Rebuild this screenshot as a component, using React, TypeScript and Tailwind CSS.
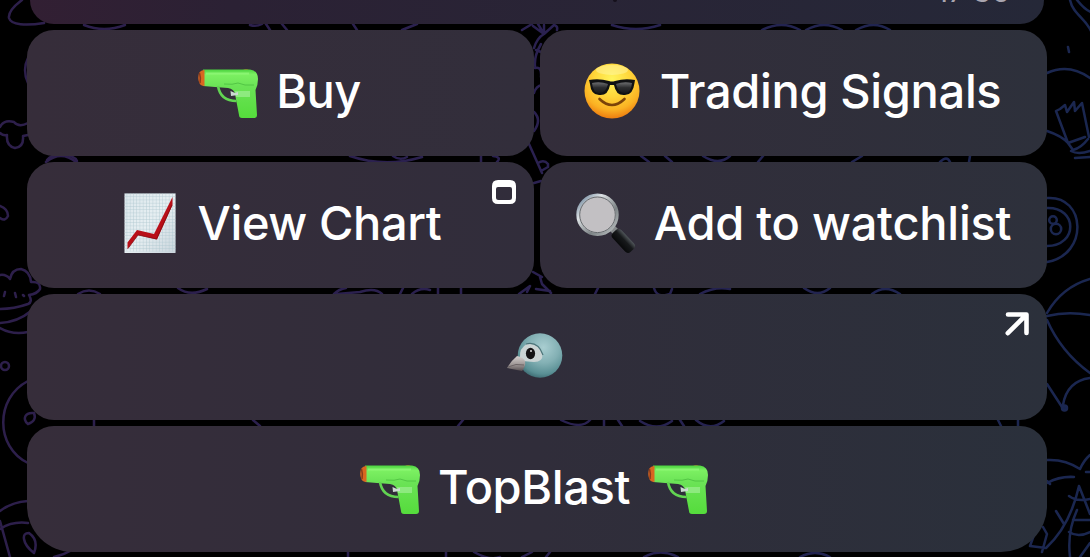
import type { ReactNode } from "react";
import clsx from "clsx";

function Wallpaper() {
  return (
    <svg
      className="absolute inset-0"
      width="1090"
      height="557"
      viewBox="0 0 1090 557"
      fill="none"
      stroke="url(#doodle)"
      strokeWidth="2.5"
      strokeLinecap="round"
      strokeLinejoin="round"
    >
      <defs>
        <linearGradient id="doodle" gradientUnits="userSpaceOnUse" x1="0" y1="0" x2="1090" y2="0">
          <stop offset="0" stopColor="#2d1f4b" />
          <stop offset="0.5" stopColor="#2a2150" />
          <stop offset="1" stopColor="#1a2750" />
        </linearGradient>
      </defs>
      {/* planet and cloud, left edge */}
      <path d="M22 0C14 6 8 12 9 18C11 25 26 26 44 23" />
      <path d="M84 25Q104 33 125 25" />
      <path d="M28 58Q22 70 28 83" />
      <path d="M0 127Q4 119 14 122Q19 128 28 123M0 133Q3 136 7 135Q6 146 15 148Q24 147 23 136L28 135" />
      <path d="M47 160Q52 154 62 155Q74 155 77 161" />
      <path d="M0 206Q8 209 8 216Q5 222 0 218" />
      {/* cupcake */}
      <path d="M0 275Q6 274 10 279Q12 269 21 269Q30 271 31 282Q41 281 40 289Q37 294 29 295Q33 302 28 304Q14 309 0 309M0 323Q18 322 31 311M0 328Q12 335 28 332M5 292L4 296M15 293L16 297M23 295L24 296" />
      <circle cx="5" cy="366" r="4" />
      <path d="M28 381C-5 398-5 447 28 463" />
      <path d="M28 424C22 419 25 412 34 413Q37 421 28 424" />
      <path d="M78 294Q89 287 100 294M94 420V426" />
      <path d="M0 511Q12 502 28 501M0 529Q12 521 28 523M0 521L10 557M24 539Q23 533 29 533Q39 540 34 553Q25 546 24 539" />
      <path d="M54 557Q63 555 70 551" />
      {/* slivers between the rows */}
      <path d="M250 25Q256 27 262 24M266 24L270 30M282 24L287 30M353 24L357 30M402 30L417 24M522 30L532 24M612 25Q636 33 660 25M762 30Q782 20 800 30M806 30Q824 20 842 30M856 30Q874 20 890 30" />
      <path d="M46 162Q61 150 76 162M350 156Q385 168 422 157M393 156Q400 161 407 157M481 156V162M493 156Q502 157 497 162M641 156L649 162M665 156L672 162M703 156Q719 166 730 156M758 162L763 156M852 162L862 156M940 162Q947 155 950 162M970 156L969 162" />
      <path d="M178 288Q190 297 207 289M334 294Q339 289 346 288M337 294L360 292Q375 287 382 294M403 288L400 294M412 294Q420 287 430 290M438 288V294M461 294V288M595 294L598 288M654 288Q657 299 670 294L672 289M700 294Q715 286 730 289M804 288Q818 298 830 288M872 294Q885 284 900 294" />
      <path d="M253 420L260 426M458 426L463 420M561 420Q581 430 590 420M604 420V426M618 420L622 426M640 421Q657 432 672 421M680 420L684 426M696 420Q710 432 724 421M998 420L1001 426M1018 420V426" />
      <path d="M348 552V557M446 552V557M474 552Q490 561 500 557M522 557L532 552M546 557L550 552M644 557Q660 548 678 557M800 557Q815 549 830 557" />
      {/* centre gutter */}
      <path d="M533 26L544 34L538 24M544 34V25M544 34L554 25Q558 26 557 30M544 34Q537 38 534 48M536 50L541 52M541 44Q534 56 535 66M535 68Q542 66 541 77M534 93Q536 86 542 85M534 112Q542 120 534 131M529 144L542 173M538 163Q544 159 548 164V167L541 171M534 183L541 181M533 272L542 277M519 294L530 286L527 292M540 277L542 284L551 293M536 289L550 291" />
      {/* right edge */}
      <path d="M1070 0C1073 14 1085 18 1091 31M1077 0Q1085 10 1091 12M1068 47L1069 52" />
      <path d="M1047 73Q1069 63 1090 78M1047 131Q1062 136 1068 143M1068 143L1056 111L1060 109L1065 105L1067 112L1074 102L1075 111L1082 103L1089 137M1068 143L1073 150Q1081 148 1088 139M1071 151Q1078 155 1090 151M1075 158L1090 157M1068 143L1085 137" />
      <path d="M1047 198C1086 195 1089 255 1047 262M1047 208C1078 207 1078 246 1047 246" />
      <circle cx="1053" cy="220" r="3.800" />
      <circle cx="1056" cy="229" r="5.200" />
      <path d="M1047 313Q1062 287 1090 279M1047 316Q1067 311 1090 315M1047 320Q1061 352 1090 373M1047 384L1062 407M1063 405Q1067 381 1090 378" />
      <circle cx="1064.500" cy="408" r="2.500" fill="#18254e" />
      <path d="M1047 460Q1065 459 1080 469Q1084 460 1090 455M1086 472H1090M1047 483Q1060 476 1074 477" />
      <path d="M1047 481L1050 484M1034 535L1030 546L1046 548Q1070 526 1079 486M1042 552L1047 534L1043 527M1056 511L1064 524M1079 486L1090 514M1069 496Q1077 502 1090 499M1070 557Q1067 532 1077 510M1069 532Q1078 538 1090 532M1073 520H1090M1080 557L1090 543" />
    </svg>
  );
}

function Pistol() {
  return (
    <svg className="size-[60px] shrink-0" viewBox="0 0 60 60">
      <defs>
        <linearGradient id="barrel" x1="0" y1="0" x2="0" y2="1">
          <stop offset="0" stopColor="#4bd33f" />
          <stop offset="0.1" stopColor="#7cf062" />
          <stop offset="0.35" stopColor="#6be356" />
          <stop offset="1" stopColor="#55dc3c" />
        </linearGradient>
      </defs>
      <path d="M45 9Q48 7 51 9V11H45Z" fill="#a85a25" />
      <path
        d="M5 8.500H52Q60 9.500 60 18Q60 24 57.500 29L59 54Q59 57 56 57H44Q41 57 41 54L37 33Q36 28 30 27L17 26L5 25Z"
        fill="url(#barrel)"
      />
      <path d="M20 25Q22.500 40 38.500 40" fill="none" stroke="#62d452" strokeWidth="2.600" />
      <path d="M8 12.500H51" stroke="#a0ff88" strokeWidth="2" opacity="0.5" />
      <path d="M26 23Q35 24 40 22Q46 25 56 24" fill="none" stroke="#4fc243" strokeWidth="0.900" />
      <path d="M37 30H52V36H38Z" fill="#a3ee98" opacity="0.65" />
      <path d="M32.500 30L37 32L40 31V34L33 35Z" fill="#cbd9d1" />
      <path d="M1 12Q3 9 6.500 9V25Q2 25 1 21Q-0.500 17 1 12Z" fill="#d96620" />
      <path d="M1.500 12Q3 17 2 22" fill="none" stroke="#8b3b1a" strokeWidth="1.500" />
    </svg>
  );
}

function Sunglasses() {
  return (
    <svg className="size-[60px] shrink-0" viewBox="0 0 60 60">
      <defs>
        <radialGradient id="face" cx="0.5" cy="0.28" r="0.72">
          <stop offset="0" stopColor="#fff45c" />
          <stop offset="0.45" stopColor="#ffd63a" />
          <stop offset="0.78" stopColor="#fbb223" />
          <stop offset="1" stopColor="#ed7d10" />
        </radialGradient>
        <linearGradient id="lens" x1="0" y1="0" x2="0" y2="1">
          <stop offset="0" stopColor="#6d6e70" />
          <stop offset="0.5" stopColor="#2c2d2f" />
          <stop offset="1" stopColor="#18191b" />
        </linearGradient>
      </defs>
      <circle cx="30" cy="30" r="27.500" fill="url(#face)" />
      <ellipse cx="30" cy="9" rx="16" ry="5" fill="#fff9b0" opacity="0.45" />
      <path
        d="M7 19Q17 17 27 20Q30 21 33 20Q43 17 53 19L52.500 22Q51 34 43 34Q34 35 32 24H28Q26 35 17 34Q9 34 8 23Z"
        fill="#101113"
      />
      <path d="M10 22Q18 20 26 23Q24 32 17 32Q11 32 10 22ZM34 23Q42 20 50 22Q49 32 43 32Q36 32 34 23Z" fill="url(#lens)" />
      <path d="M17.500 38Q30 50 42.500 38" fill="none" stroke="#7b4309" strokeWidth="2.600" strokeLinecap="round" />
    </svg>
  );
}

function ChartEmoji() {
  return (
    <svg className="size-[60px] shrink-0" viewBox="0 0 60 60">
      <defs>
        <pattern id="grid" width="3.250" height="3.250" patternUnits="userSpaceOnUse">
          <path d="M0 0H3.250M0 0V3.250" stroke="#b0c8d1" strokeWidth="0.800" />
        </pattern>
        <linearGradient id="paper" x1="0" y1="0" x2="1" y2="1">
          <stop offset="0" stopColor="#dce7ec" />
          <stop offset="0.5" stopColor="#e7eff2" />
          <stop offset="1" stopColor="#cbd6dd" />
        </linearGradient>
      </defs>
      <rect x="4.500" y="0.500" width="51" height="59.500" fill="url(#paper)" />
      <rect x="4.500" y="0.500" width="51" height="58" fill="url(#grid)" />
      <path d="M7.500 56V49.500L17 37L34 41L52.500 4V12L37 46.500L18 42Z" fill="#b90f18" />
      <path d="M8 55.500L18 42L36.500 46L52 12" fill="none" stroke="#850c13" strokeWidth="0.800" />
    </svg>
  );
}

function Magnifier() {
  return (
    <svg className="size-[60px] shrink-0" viewBox="0 0 60 60">
      <defs>
        <linearGradient id="rim" x1="0" y1="0" x2="1" y2="1">
          <stop offset="0" stopColor="#56738c" />
          <stop offset="0.3" stopColor="#dde2e5" />
          <stop offset="0.65" stopColor="#7c8385" />
          <stop offset="1" stopColor="#c4c9cb" />
        </linearGradient>
        <linearGradient id="handle" x1="0" y1="1" x2="0" y2="0">
          <stop offset="0" stopColor="#08090a" />
          <stop offset="0.6" stopColor="#17191b" />
          <stop offset="1" stopColor="#50565a" />
        </linearGradient>
      </defs>
      <path d="M33 37L38 32L42 36L37 41Z" fill="#85898b" />
      <rect x="-3" y="-6" width="26" height="12" rx="4" transform="translate(40.500 40.500) rotate(47)" fill="url(#handle)" />
      <circle cx="21.500" cy="21.800" r="19.700" fill="#c2c0c3" stroke="url(#rim)" strokeWidth="3" />
      <circle cx="21.500" cy="21.800" r="17.800" fill="none" stroke="#5d6366" strokeWidth="0.900" />
    </svg>
  );
}

function Bird() {
  return (
    <svg className="size-[60px] shrink-0" viewBox="0 0 60 60">
      <defs>
        <radialGradient id="head" cx="0.58" cy="0.32" r="0.7">
          <stop offset="0" stopColor="#a9ced1" />
          <stop offset="0.5" stopColor="#83b0b4" />
          <stop offset="0.85" stopColor="#598f94" />
          <stop offset="1" stopColor="#3f6d74" />
        </radialGradient>
        <linearGradient id="beak" x1="0" y1="0" x2="0" y2="1">
          <stop offset="0" stopColor="#d8d2d0" />
          <stop offset="0.6" stopColor="#9a9392" />
          <stop offset="1" stopColor="#574f52" />
        </linearGradient>
      </defs>
      <circle cx="33" cy="30.500" r="22.300" fill="url(#head)" />
      <path d="M13 33Q12 23 20 19Q31 17 35.500 29Q36 37 27 37L15 36Z" fill="#cbd4d4" />
      <path d="M19 19Q31 16 36 30" fill="none" stroke="#4c7479" strokeWidth="1.200" />
      <ellipse cx="23.500" cy="28.500" rx="4.600" ry="5.700" fill="#151314" />
      <circle cx="24" cy="26" r="1" fill="#d8d8d8" />
      <path d="M10 31Q16 32 18 36Q19 42 15 46L0 43Q4 36 10 31Z" fill="url(#beak)" />
      <path d="M1 42Q9 38 17 40" fill="none" stroke="#6d6566" strokeWidth="1" />
    </svg>
  );
}

function Label({ children, className }: { children: ReactNode; className: string }) {
  return <span className={clsx("whitespace-nowrap pb-px leading-[60px]", className)}>{children}</span>;
}

function KeyboardButton({ children, className }: { children: ReactNode; className: string }) {
  return (
    <button
      className={clsx(
        "relative flex h-[126px] items-center justify-center gap-[18px] bg-linear-to-r pb-1 text-[47px] font-medium text-white",
        className
      )}
    >
      {children}
    </button>
  );
}

export default function App() {
  return (
    <div className="relative h-[557px] w-[1090px] overflow-hidden bg-black font-['Inter',sans-serif]">
      <Wallpaper />
      <div className="relative flex flex-col gap-1.5 pr-[43px] pl-[27px]">
        <div className="mr-[3px] ml-[3px] flex h-6 items-start justify-end overflow-hidden rounded-b-[26px] bg-linear-to-r from-[#321f33] via-[#2b2134] via-20% to-[#252838] pr-[34px]">
          <span className="mr-[319px] h-0.5 w-1 rounded-b-full bg-[#15101b]" />
          <span className="-mt-[29px] text-[30px] leading-[40px] text-[#aaa6b0]">17:36</span>
        </div>

        <div className="grid grid-cols-2 gap-1.5">
          <KeyboardButton className="rounded-[27px] from-[#362d3a] to-[#322e3b] pr-0.5">
            <Pistol />
            <Label className="tracking-[-0.5px]">Buy</Label>
          </KeyboardButton>
          <KeyboardButton className="rounded-[27px] from-[#332d3a] to-[#2d303b] pr-1">
            <Sunglasses />
            <Label className="tracking-[-0.35px]">Trading Signals</Label>
          </KeyboardButton>
        </div>

        <div className="grid grid-cols-2 gap-1.5">
          <KeyboardButton className="rounded-[27px] from-[#362d3a] to-[#312d3b]">
            <ChartEmoji />
            <Label className="tracking-[-0.4px]">View Chart</Label>
            <svg className="absolute top-[18px] right-[18px] size-6" viewBox="0 0 24 24">
              <path
                fillRule="evenodd"
                fill="#fff"
                d="M6 0H18Q24 0 24 6V18Q24 24 18 24H6Q0 24 0 18V6Q0 0 6 0ZM6 7Q4 7 4 9V17.500Q4 20 6.500 20H17.500Q20 20 20 17.500V9Q20 7 18 7Z"
              />
            </svg>
          </KeyboardButton>
          <KeyboardButton className="rounded-[27px] from-[#322d3a] to-[#2d303b]">
            <Magnifier />
            <Label className="tracking-[-0.25px]">Add to watchlist</Label>
          </KeyboardButton>
        </div>

        <KeyboardButton className="rounded-[27px] from-[#362d3a] via-[#302d3a] to-[#2b303b]">
          <Bird />
          <svg className="absolute top-[18px] right-[18px] size-6" viewBox="0 0 24 24" fill="none">
            <path
              d="M3 2.500H21.500V21M21 3L2.800 21.200"
              stroke="#fff"
              strokeWidth="4.600"
              strokeLinecap="round"
              strokeLinejoin="round"
            />
          </svg>
        </KeyboardButton>

        <KeyboardButton className="rounded-t-[27px] rounded-b-[46px] from-[#362d3a] via-[#302d3a] to-[#2a303b] pr-1.5">
          <Pistol />
          <Label className="tracking-[-0.4px]">TopBlast</Label>
          <Pistol />
        </KeyboardButton>
      </div>
    </div>
  );
}
